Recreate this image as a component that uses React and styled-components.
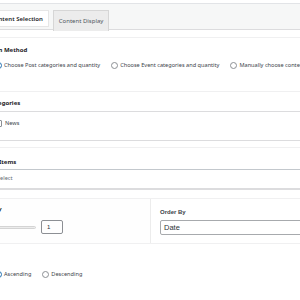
import React from 'react'
import styled, { createGlobalStyle } from 'styled-components'

const GlobalStyle = createGlobalStyle`
  html, body {
    margin: 0;
    background: #fff;
    overflow: hidden;
  }
  body {
    font-family: "Noto Sans", "Open Sans", sans-serif;
    font-size: 5.6px;
    color: #3c434a;
  }
`

const Page = styled.div`
  width: 360px;
  margin-left: -20px;
  padding-top: 3px;
`

const TabBar = styled.div`
  display: flex;
  align-items: flex-start;
  gap: 4px;
  height: 27px;
  padding-left: 2px;
  box-sizing: border-box;
  padding-top: 6px;
  background: #f6f7f7;
  border-top: 1px solid #e2e4e7;
  border-bottom: 1px solid #dcdcde;
`

const Tab = styled.div`
  display: flex;
  align-items: center;
  height: ${(p) => (p.$active ? '17px' : '21px')};
  padding: ${(p) => (p.$active ? '0 5px 0 8px' : '0 5px')};
  background: ${(p) => (p.$active ? '#fff' : '#ececec')};
  border: 1px solid ${(p) => (p.$active ? '#e6e6e6' : '#d6d6d6')};
  border-bottom: ${(p) => (p.$active ? '1px solid #e6e6e6' : 'none')};
  box-sizing: border-box;
  font-size: 6px;
  font-weight: ${(p) => (p.$active ? 600 : 400)};
  color: ${(p) => (p.$active ? '#1d2327' : '#50575e')};
  white-space: nowrap;
`

const Panel = styled.div`
  margin-top: 7px;
  border-top: 1px solid #f0f0f1;
`

const Section = styled.div`
  padding: ${(p) => p.$pad || '8px 0 0'};
  padding-left: 15px;
  border-bottom: 1px solid ${(p) => p.$line || '#f0f0f1'};
`

const Label = styled.div`
  height: 8px;
  line-height: 8px;
  font-size: 6px;
  font-weight: 700;
  color: #1d2327;
  white-space: nowrap;
  margin-left: ${(p) => p.$cut || 0}px;
`

const RadioRow = styled.div`
  display: flex;
  align-items: center;
  gap: 11px;
  height: 8px;
  margin-top: ${(p) => p.$top || 0}px;
`

const Choice = styled.label`
  display: flex;
  align-items: center;
  gap: 2px;
  white-space: nowrap;
`

const Radio = styled.span`
  width: 7px;
  height: 7px;
  border-radius: 50%;
  border: 1px solid ${(p) => (p.$checked ? '#2271b1' : '#8c8f94')};
  box-sizing: border-box;
  background: #fff;
  display: grid;
  place-items: center;
  &::after {
    content: '';
    width: 3px;
    height: 3px;
    border-radius: 50%;
    background: ${(p) => (p.$checked ? '#2271b1' : 'transparent')};
  }
`

const ListBox = styled.div`
  margin-top: ${(p) => p.$top}px;
  border-top: 1px solid ${(p) => p.$topColor || '#dcdcde'};
  border-bottom: ${(p) => p.$bottom || '1px solid #dcdcde'};
  padding: ${(p) => p.$pad};
`

const CheckRow = styled.div`
  display: flex;
  align-items: center;
  gap: 3px;
  height: 8px;
`

const Checkbox = styled.span`
  width: 7px;
  height: 7px;
  border: 1px solid #8c8f94;
  border-radius: 1px;
  box-sizing: border-box;
  background: #fff;
`

const Placeholder = styled.div`
  height: 8px;
  line-height: 8px;
  color: #646970;
  margin-left: ${(p) => p.$cut || 0}px;
`

const Columns = styled.div`
  display: grid;
  grid-template-columns: 171px 1fr;
  border-bottom: 1px solid #f0f0f1;
`

const Column = styled.div`
  padding: ${(p) => p.$pad};
  border-right: ${(p) => (p.$divider ? '1px solid #ececec' : 'none')};
  background: ${(p) => (p.$divider ? '#fefefe' : '#fff')};
`

const SliderRow = styled.div`
  display: flex;
  align-items: center;
  gap: 5px;
  margin-top: 7px;
`

const Track = styled.div`
  width: 41px;
  height: 3px;
  border-radius: 2px;
  background: #ececec;
  border: 1px solid #d4d4d4;
  box-sizing: border-box;
`

const NumberBox = styled.div`
  width: 22px;
  height: 14px;
  border: 1px solid #8c8f94;
  border-radius: 2px;
  box-sizing: border-box;
  padding-left: 5px;
  line-height: 12px;
  font-family: "Liberation Sans", Arial, sans-serif;
  font-size: 6px;
  color: #2c3338;
`

const SmallLabel = styled.div`
  font-family: "Liberation Sans", Arial, sans-serif;
  font-size: 6px;
  font-weight: 700;
  color: #3c434a;
  height: 8px;
  line-height: 8px;
`

const Select = styled.div`
  margin-top: 4px;
  height: 15px;
  border: 1px solid #a7aaad;
  border-radius: 2px;
  box-sizing: border-box;
  padding-left: 3px;
  line-height: 13px;
  font-family: "Liberation Sans", Arial, sans-serif;
  font-size: 7.5px;
  color: #2c3338;
`

export default function App() {
  return (
    <>
      <GlobalStyle />
      <Page>
        <TabBar>
          <Tab $active>Content Selection</Tab>
          <Tab>Content Display</Tab>
        </TabBar>
        <Panel>
          <Section $pad="8px 0 22px">
            <Label $cut={-20}>Selection Method</Label>
            <RadioRow $top={7}>
              <Choice>
                <Radio $checked />
                Choose Post categories and quantity
              </Choice>
              <Choice>
                <Radio />
                Choose Event categories and quantity
              </Choice>
              <Choice>
                <Radio />
                Manually choose content
              </Choice>
            </RadioRow>
          </Section>
          <Section $pad="7px 0 6px">
            <Label $cut={-7}>Categories</Label>
            <ListBox $top={4} $pad="7px 0 13px">
              <CheckRow>
                <Checkbox />
                News
              </CheckRow>
            </ListBox>
          </Section>
          <Section $pad="10px 0 8px">
            <Label $cut={-23}>Selected Items</Label>
            <ListBox $top={3} $topColor="#c3c8cd" $bottom="2px solid #dcdcde" $pad="4px 0 6px">
              <Placeholder $cut={2}>Select</Placeholder>
            </ListBox>
          </Section>
          <Columns>
            <Column $divider $pad="6px 0 9px 15px">
              <Label $cut={-20}>Quantity</Label>
              <SliderRow>
                <Track />
                <NumberBox>1</NumberBox>
              </SliderRow>
            </Column>
            <Column $pad="9px 0 8px 9px">
              <SmallLabel>Order By</SmallLabel>
              <Select>Date</Select>
            </Column>
          </Columns>
          <Section $pad="26px 0 22px" $line="#dcdcde">
            <RadioRow>
              <Choice>
                <Radio $checked />
                Ascending
              </Choice>
              <Choice>
                <Radio />
                Descending
              </Choice>
            </RadioRow>
          </Section>
        </Panel>
      </Page>
    </>
  )
}
